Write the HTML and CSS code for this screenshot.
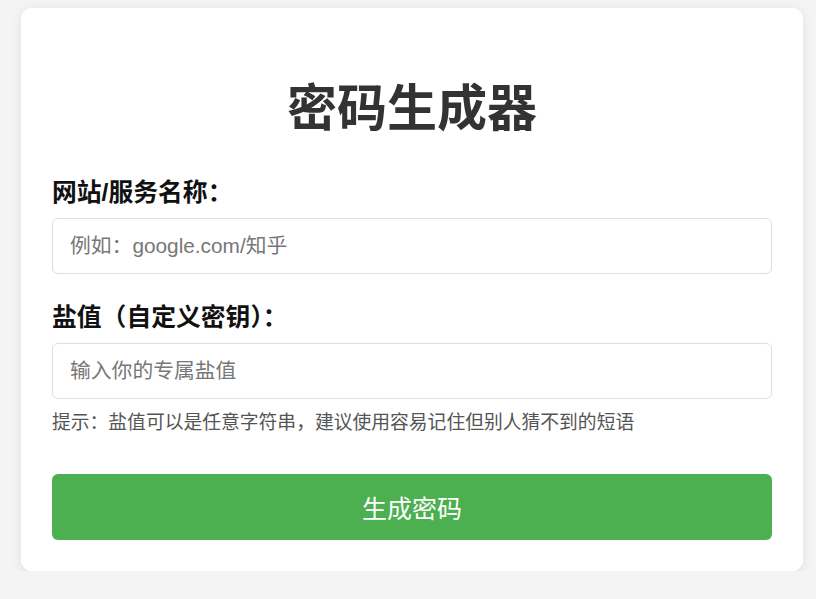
FILE: index.html
```html
<!DOCTYPE html>
<html lang="zh-CN">
<head>
<meta charset="utf-8">
<title>密码生成器</title>
<link rel="stylesheet" href="styles.css">
</head>
<body>
<main class="card">
  <h1 class="title">密码生成器</h1>
  <label class="label" for="site">网站/服务名称：</label>
  <input class="field" id="site" type="text" placeholder="例如：google.com/知乎">
  <label class="label label-second" for="salt">盐值（自定义密钥）：</label>
  <input class="field" id="salt" type="text" placeholder="输入你的专属盐值">
  <p class="hint">提示：盐值可以是任意字符串，建议使用容易记住但别人猜不到的短语</p>
  <button class="btn" type="button">生成密码</button>
</main>
</body>
</html>
```

FILE: styles.css
```css
* { box-sizing: border-box; }

html, body {
  margin: 0;
  padding: 0;
  background: #f4f4f4;
  font-family: "Liberation Sans", "Noto Sans CJK SC", sans-serif;
}

body {
  padding: 8px 0 0 21px;
}

.card {
  width: 782px;
  background: #ffffff;
  border-radius: 11px;
  box-shadow: 0 2px 12px rgba(0, 0, 0, 0.08);
  padding: 30px 31px 31px;
  display: flex;
  flex-direction: column;
}

.title {
  margin: 42px 0 0;
  font-size: 50px;
  line-height: 58px;
  font-weight: 700;
  color: #333333;
  text-align: center;
}

.label {
  margin-top: 41px;
  font-size: 24.8px;
  line-height: 28px;
  font-weight: 700;
  color: #111111;
}

.label-second {
  margin-top: 30px;
}

.field {
  margin-top: 11px;
  height: 56px;
  width: 100%;
  border: 1px solid #dddddd;
  border-radius: 6px;
  padding: 0 17px;
  font-family: "Liberation Sans", "Noto Sans CJK SC", sans-serif;
  font-size: 20.8px;
  color: #333333;
  background: #ffffff;
  outline: none;
}

.field::placeholder {
  color: #777777;
}

.hint {
  margin: 13px 0 0;
  font-size: 18.8px;
  line-height: 22px;
  color: #555555;
}

.btn {
  margin-top: 40px;
  height: 66px;
  width: 100%;
  border: none;
  border-radius: 6px;
  background: #4caf50;
  color: #ffffff;
  font-family: "Liberation Sans", "Noto Sans CJK SC", sans-serif;
  font-size: 25px;
  cursor: pointer;
}
```
